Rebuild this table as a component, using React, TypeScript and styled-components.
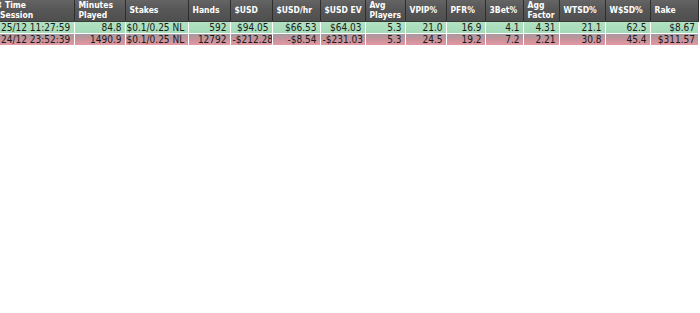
import React from 'react';
import styled, { createGlobalStyle } from 'styled-components';

const GlobalStyle = createGlobalStyle`
    html, body {
        margin: 0;
        padding: 0;
        background: #ffffff;
    }
    body {
        font-family: "DejaVu Sans Condensed", "DejaVu Sans", Tahoma, sans-serif;
        font-stretch: condensed;
        font-size: 10px;
    }
`;

interface Column {
    key: string;
    label: string[];
    width: number;
    align: 'left' | 'right';
}

interface Session {
    result: 'win' | 'loss';
    cells: Record<string, string>;
}

const columns: Column[] = [
    { key: 'time', label: ['Time', 'Session'], width: 74, align: 'left' },
    { key: 'minutes', label: ['Minutes', 'Played'], width: 51, align: 'right' },
    { key: 'stakes', label: ['Stakes'], width: 63, align: 'left' },
    { key: 'hands', label: ['Hands'], width: 42, align: 'right' },
    { key: 'usd', label: ['$USD'], width: 42, align: 'right' },
    { key: 'usdhr', label: ['$USD/hr'], width: 48, align: 'right' },
    { key: 'usdev', label: ['$USD EV'], width: 45, align: 'right' },
    { key: 'players', label: ['Avg', 'Players'], width: 40, align: 'right' },
    { key: 'vpip', label: ['VPIP%'], width: 41, align: 'right' },
    { key: 'pfr', label: ['PFR%'], width: 39, align: 'right' },
    { key: 'threebet', label: ['3Bet%'], width: 38, align: 'right' },
    { key: 'agg', label: ['Agg', 'Factor'], width: 36, align: 'right' },
    { key: 'wtsd', label: ['WTSD%'], width: 46, align: 'right' },
    { key: 'wsd', label: ['W$SD%'], width: 45, align: 'right' },
    { key: 'rake', label: ['Rake'], width: 48, align: 'right' },
];

const sessions: Session[] = [
    {
        result: 'win',
        cells: {
            time: '25/12 11:27:59', minutes: '84.8', stakes: '$0.1/0.25 NL', hands: '592',
            usd: '$94.05', usdhr: '$66.53', usdev: '$64.03', players: '5.3', vpip: '21.0',
            pfr: '16.9', threebet: '4.1', agg: '4.31', wtsd: '21.1', wsd: '62.5', rake: '$8.67',
        },
    },
    {
        result: 'loss',
        cells: {
            time: '24/12 23:52:39', minutes: '1490.9', stakes: '$0.1/0.25 NL', hands: '12792',
            usd: '-$212.28', usdhr: '-$8.54', usdev: '-$231.03', players: '5.3', vpip: '24.5',
            pfr: '19.2', threebet: '7.2', agg: '2.21', wtsd: '30.8', wsd: '45.4', rake: '$311.57',
        },
    },
];

const Table = styled.table`
    border-collapse: collapse;
    table-layout: fixed;
    width: 698px;
`;

const HeaderCell = styled.th`
    background: linear-gradient(#646464, #575757 45%, #4f4f4f);
    color: #ffffff;
    font-size: 8.5px;
    font-weight: bold;
    text-align: left;
    vertical-align: middle;
    line-height: 9.5px;
    height: 21px;
    padding: 0 1px 0 4px;
    border-left: 1px solid #7a7a7a;
    border-right: 1px solid #2e2e2e;
    border-bottom: 1px solid #3a3a3a;
    white-space: nowrap;
    overflow: hidden;

    &:first-child {
        padding-left: 0;
        border-left: none;
    }
`;

const SortMark = styled.span`
    display: inline-block;
    width: 3px;
    overflow: hidden;
    font-size: 9px;
    vertical-align: top;
    direction: rtl;
    margin-right: 2px;
`;

const Row = styled.tr<{ $result: 'win' | 'loss' }>`
    background: ${({ $result }) =>
        $result === 'win'
            ? 'linear-gradient(#b2e2c2, #a3d9b6)'
            : 'linear-gradient(#a49aa0, #c8929a 45%, #e79aa5)'};
`;

const Cell = styled.td<{ $align: 'left' | 'right' }>`
    color: #1a1a1a;
    text-align: ${({ $align }) => $align};
    height: 11px;
    line-height: 11px;
    padding: 0 3px 0 ${({ $align }) => ($align === 'left' ? '1px' : '2px')};
    border-left: 1px solid rgba(255, 255, 255, 0.7);
    border-top: 1px solid rgba(255, 255, 255, 0.6);
    white-space: nowrap;
    overflow: hidden;

    &:first-child {
        border-left: none;
    }
`;

const App = () => {
    return (
        <>
            <GlobalStyle />
            <Table>
                <colgroup>
                    {columns.map(col => <col key={col.key} style={{ width: col.width }} />)}
                </colgroup>
                <thead>
                    <tr>
                        {columns.map((col, i) => (
                            <HeaderCell key={col.key}>
                                {i === 0 && <SortMark>⇕</SortMark>}
                                {col.label[0]}
                                {col.label[1] && <><br />{col.label[1]}</>}
                            </HeaderCell>
                        ))}
                    </tr>
                </thead>
                <tbody>
                    {sessions.map(session => (
                        <Row key={session.cells.time} $result={session.result}>
                            {columns.map(col => (
                                <Cell key={col.key} $align={col.align}>
                                    {session.cells[col.key]}
                                </Cell>
                            ))}
                        </Row>
                    ))}
                </tbody>
            </Table>
        </>
    );
};

export default App;
